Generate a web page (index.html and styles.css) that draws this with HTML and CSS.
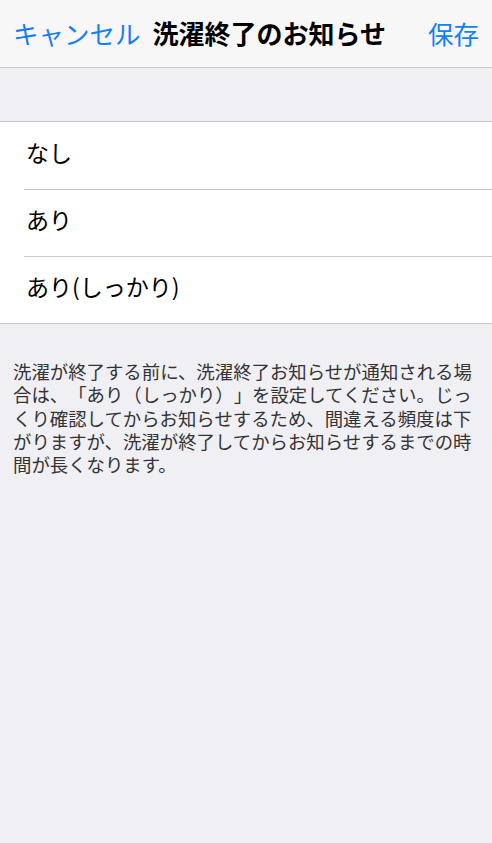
FILE: index.html
```html
<!DOCTYPE html>
<html lang="ja">
<head>
<meta charset="utf-8">
<link rel="stylesheet" href="styles.css">
</head>
<body>
<header class="nav">
  <span class="nav-btn">キャンセル</span>
  <span class="nav-title">洗濯終了のお知らせ</span>
  <span class="nav-btn">保存</span>
</header>
<main class="content">
  <ul class="group">
    <li class="row">なし</li>
    <li class="row">あり</li>
    <li class="row">あり(しっかり)</li>
  </ul>
  <p class="footer">洗濯が終了する前に、洗濯終了お知らせが通知される場合は、「あり（しっかり）」を設定してください。じっくり確認してからお知らせするため、間違える頻度は下がりますが、洗濯が終了してからお知らせするまでの時間が長くなります。</p>
</main>
</body>
</html>
```
FILE: styles.css
```css
* { box-sizing: border-box; }
html, body { margin: 0; padding: 0; }
body {
  width: 492px;
  height: 843px;
  background: #efeff4;
  font-family: "Noto Sans CJK JP", "Noto Sans", sans-serif;
  text-spacing-trim: space-all;
  overflow: hidden;
}
.nav {
  height: 68px;
  background: #f7f7f7;
  border-bottom: 1px solid #c8c7cc;
  display: flex;
  align-items: center;
  padding: 0 13px 2px 13px;
}
.nav-btn {
  color: #157efb;
  font-size: 25.5px;
  line-height: 1;
}
.nav-title {
  color: #000;
  font-size: 26px;
  font-weight: 700;
  line-height: 1;
  margin-left: 12px;
  margin-right: auto;
}
.content {
  padding-top: 53px;
}
.group {
  list-style: none;
  margin: 0;
  padding: 0;
  background: #fff;
  border-top: 1px solid #c8c7cc;
  border-bottom: 1px solid #c8c7cc;
}
.row {
  height: 67px;
  display: flex;
  align-items: center;
  padding-left: 26px;
  padding-bottom: 8px;
  font-size: 23px;
  color: #000;
  position: relative;
}
.row + .row::before {
  content: "";
  position: absolute;
  left: 24px;
  right: 0;
  top: 0;
  border-top: 1px solid #c8c7cc;
}
.footer {
  margin: 0;
  padding: 36px 13px 0 13px;
  font-size: 18.4px;
  line-height: 23.3px;
  color: #333;
}
```
